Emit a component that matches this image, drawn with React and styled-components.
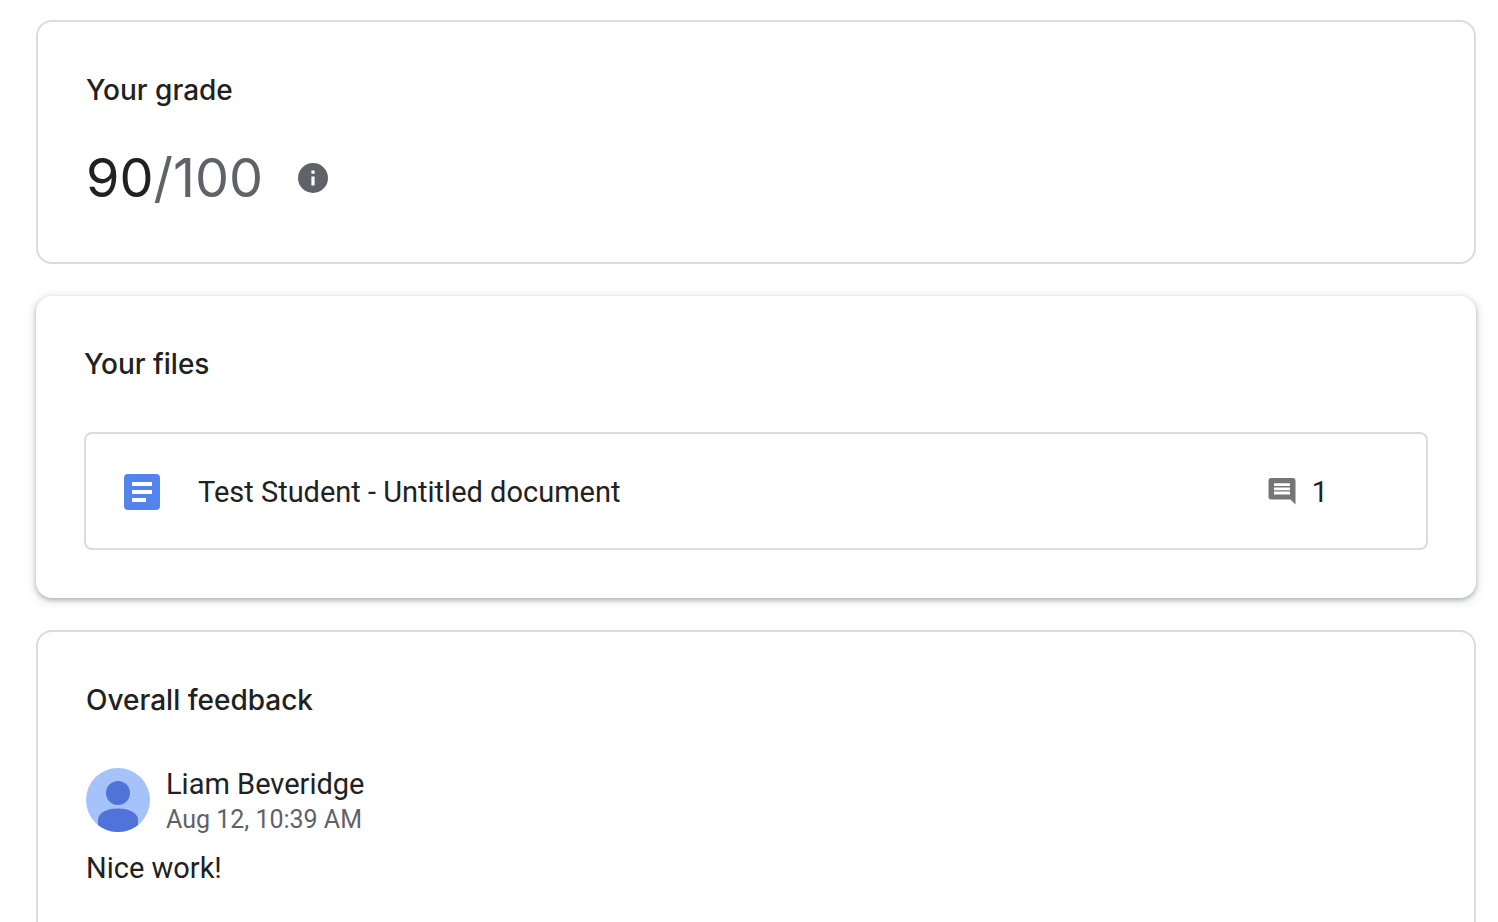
import React from 'react';
import styled, { createGlobalStyle } from 'styled-components';

const GlobalStyle = createGlobalStyle`
  * {
    box-sizing: border-box;
  }
  body {
    margin: 0;
    background-color: #ffffff;
    color: #212121;
    font-family: Roboto, 'Liberation Sans', sans-serif;
    font-size: 29px;
    line-height: 40px;
  }
`;

const Page = styled.main`
  height: 100vh;
  overflow: hidden;
  padding: 20px 22px 0 36px;
  display: flex;
  flex-direction: column;
  gap: 32px;
`;

const Card = styled.section`
  flex-shrink: 0;
  padding: 48px;
  border-radius: 16px;
  border: ${(props) => (props.$raised ? 'none' : '2px solid #dadce0')};
  box-shadow: ${(props) =>
    props.$raised
      ? '0 2px 4px rgba(60, 64, 67, 0.3), 0 2px 8px 2px rgba(60, 64, 67, 0.15)'
      : 'none'};
`;

const Title = styled.h2`
  margin: 0 0 ${(props) => (props.$tight ? 32 : 48)}px;
  font-family: Inter, Roboto, sans-serif;
  font-size: 28px;
  font-weight: 500;
  line-height: 40px;
`;

const GradeRow = styled.div`
  display: flex;
  align-items: center;
  gap: 34px;
`;

const Grade = styled.p`
  margin: 0;
  font-family: Inter, Roboto, sans-serif;
  font-size: 54px;
  line-height: 72px;
`;

const Total = styled.span`
  color: #5f6368;
`;

const InfoButton = styled.button`
  display: flex;
  padding: 0;
  border: none;
  background: none;
  color: #5f6368;
  cursor: pointer;
`;

const FileLink = styled.a`
  display: flex;
  align-items: center;
  padding: 38px 98px 36px 38px;
  border: 2px solid #dadce0;
  border-radius: 8px;
  color: inherit;
  text-decoration: none;
`;

const FileName = styled.span`
  flex: 1;
  margin-left: 38px;
`;

const Comments = styled.span`
  display: flex;
  align-items: center;
  gap: 16px;
`;

const Author = styled.div`
  display: flex;
  align-items: flex-start;
  gap: 16px;
  margin-bottom: 8px;
`;

const Name = styled.div`
  line-height: 32px;
`;

const Posted = styled.div`
  color: #5f6368;
  font-size: 25px;
  line-height: 40px;
`;

const Feedback = styled.p`
  margin: 0;
`;

const files = [
  {
    id: 1,
    title: 'Test Student - Untitled document',
    comments: 1,
  },
];

function InfoIcon() {
  return (
    <svg width="32" height="32" viewBox="0 0 32 32" aria-hidden="true">
      <circle cx="16" cy="16" r="15" fill="currentColor" />
      <path fill="#ffffff" d="M14.4 8.6h3.2v3.2h-3.2zM14.4 14.4h3.2v9h-3.2z" />
    </svg>
  );
}

function DocIcon() {
  return (
    <svg width="36" height="36" viewBox="0 0 36 36" aria-hidden="true">
      <rect width="36" height="36" rx="4" fill="#5383ec" />
      <path fill="#ffffff" d="M8 8h20v4H8zM8 16h20v4H8zM8 24h14v4H8z" />
    </svg>
  );
}

function CommentIcon() {
  return (
    <svg width="28" height="28" viewBox="0 0 28 28" aria-hidden="true">
      <path
        fill="#757575"
        d="M3.2 0h21.6A2.7 2.7 0 0 1 27.5 2.7V26.5L22.4 21.5H3.2A2.7 2.7 0 0 1 .5 18.8V2.7A2.7 2.7 0 0 1 3.2 0z"
      />
      <path fill="#ffffff" d="M6 5.2h16v2.8H6zM6 9.4h16v2.8H6zM6 13.6h16v2.8H6z" />
    </svg>
  );
}

function Avatar() {
  return (
    <svg width="64" height="64" viewBox="0 0 64 64" aria-hidden="true">
      <circle cx="32" cy="32" r="32" fill="#a6c2fa" />
      <circle cx="32" cy="25" r="12" fill="#5073d9" />
      <path
        fill="#5073d9"
        d="M12 57V52C12 45.5 20 40.6 32 40.6S52 45.5 52 52V57A32 32 0 0 1 12 57z"
      />
    </svg>
  );
}

export default function App() {
  return (
    <>
      <GlobalStyle />
      <Page>
        <Card>
          <Title $tight>Your grade</Title>
          <GradeRow>
            <Grade>
              90<Total>/100</Total>
            </Grade>
            <InfoButton type="button" aria-label="Grade details">
              <InfoIcon />
            </InfoButton>
          </GradeRow>
        </Card>

        <Card $raised>
          <Title>Your files</Title>
          {files.map((file) => (
            <FileLink key={file.id} href="#">
              <DocIcon />
              <FileName>{file.title}</FileName>
              <Comments>
                <CommentIcon />
                {file.comments}
              </Comments>
            </FileLink>
          ))}
        </Card>

        <Card>
          <Title>Overall feedback</Title>
          <Author>
            <Avatar />
            <div>
              <Name>Liam Beveridge</Name>
              <Posted>Aug 12, 10:39 AM</Posted>
            </div>
          </Author>
          <Feedback>Nice work!</Feedback>
        </Card>
      </Page>
    </>
  );
}
